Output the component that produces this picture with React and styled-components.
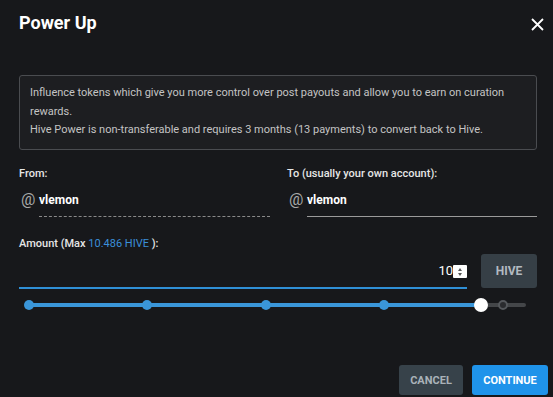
import React from 'react';
import styled, { createGlobalStyle } from 'styled-components';

const GlobalStyle = createGlobalStyle`
	body {
		margin: 0;
		background: #17181b;
		font-family: Roboto, "Liberation Sans", sans-serif;
	}
`;

const Modal = styled.div`
	width: 553px;
	height: 397px;
	box-sizing: border-box;
	display: flex;
	flex-direction: column;
	background: #17181b;
	color: #e4e4e4;
`;

const Header = styled.div`
	display: flex;
	justify-content: space-between;
	align-items: flex-start;
	padding: 12px 9px 0 19px;
`;

const Title = styled.h2`
	margin: 0;
	font-size: 18px;
	line-height: 22px;
	font-weight: 700;
	color: #fff;
`;

const CloseButton = styled.button`
	display: flex;
	margin-top: 6px;
	padding: 0;
	border: 0;
	background: none;
	color: #fff;
	cursor: pointer;
`;

const Body = styled.div`
	padding: 0 16px 0 19px;
`;

const InfoBox = styled.div`
	margin-top: 41px;
	padding: 8px 10px 9px;
	border: 1px solid #4a4c50;
	border-radius: 3px;
	background: #1d1e21;
	font-size: 11px;
	line-height: 18.5px;
	color: #c4c4c4;
`;

const Fields = styled.div`
	display: grid;
	grid-template-columns: 251px 1fr;
	column-gap: 17px;
	margin-top: 17px;
`;

const Label = styled.div`
	font-size: 11px;
	line-height: 14px;
	font-weight: 500;
	color: #e6e6e6;
	margin-bottom: ${(p) => p.$gap || 0}px;
`;

const AccountRow = styled.div`
	display: flex;
	align-items: flex-end;
`;

const At = styled.span`
	width: 18px;
	padding: 0 0 8px 2px;
	font-size: 16px;
	line-height: 18px;
	color: #a8a8a8;
`;

const AccountInput = styled.div`
	flex: 1;
	padding: 6px 0 8px;
	font-size: 12px;
	line-height: 16px;
	font-weight: 700;
	color: #fff;
	border-bottom: 1px ${(p) => (p.$dashed ? 'dashed #8a8a8a' : 'solid #9a9a9a')};
`;

const AmountLabel = styled(Label)`
	margin-top: 20px;
`;

const MaxLink = styled.span`
	color: #3b8fd9;
	font-weight: 400;
`;

const AmountRow = styled.div`
	display: flex;
	align-items: flex-start;
	gap: 14px;
	margin-top: 3px;
`;

const AmountInput = styled.div`
	flex: 1;
	height: 33px;
	display: flex;
	justify-content: flex-end;
	align-items: center;
	border-bottom: 2px solid #2f8fd6;
	font-size: 13px;
	color: #fff;
`;

const Spinner = styled.span`
	display: flex;
	flex-direction: column;
	justify-content: center;
	align-items: center;
	gap: 2px;
	width: 14px;
	height: 13px;
	margin-top: 3px;
	background: #fff;
	border-radius: 1px;

	&::before,
	&::after {
		content: '';
		border-left: 2.5px solid transparent;
		border-right: 2.5px solid transparent;
	}
	&::before {
		border-bottom: 3px solid #555;
	}
	&::after {
		border-top: 3px solid #555;
	}
`;

const UnitButton = styled.button`
	width: 56px;
	height: 34px;
	border: 0;
	border-radius: 3px;
	background: #363f46;
	color: #b3bac1;
	font-family: inherit;
	font-size: 12px;
	font-weight: 700;
`;

const Slider = styled.div`
	position: relative;
	height: 16px;
	margin: 8px 11px 0 10px;
`;

const Rail = styled.div`
	position: absolute;
	left: 0;
	right: 0;
	top: 6px;
	height: 4px;
	border-radius: 2px;
	background: #444649;
`;

const Track = styled(Rail)`
	right: auto;
	background: #3a96d9;
`;

const Dot = styled.span`
	position: absolute;
	top: 3px;
	width: 10px;
	height: 10px;
	box-sizing: border-box;
	margin-left: -5px;
	border-radius: 50%;
	background: ${(p) => (p.$active ? '#3a96d9' : '#2a2b2e')};
	border: ${(p) => (p.$active ? '0' : '2px solid #55585c')};
`;

const Thumb = styled.span`
	position: absolute;
	top: 1px;
	width: 14px;
	height: 14px;
	margin-left: -7px;
	border-radius: 50%;
	background: #fff;
`;

const Footer = styled.div`
	display: flex;
	justify-content: flex-end;
	gap: 9px;
	margin-top: auto;
	padding: 0 5px 2px 0;
`;

const Button = styled.button`
	width: ${(p) => p.$width}px;
	height: 30px;
	padding: 0;
	border: 0;
	border-radius: 3px;
	font-family: inherit;
	font-size: 11px;
	font-weight: 700;
	background: ${(p) => (p.$primary ? '#1f93ea' : '#37424a')};
	color: ${(p) => (p.$primary ? '#fff' : '#aab2b9')};
`;

const max = 10.486;
const marks = [0, 2.5, 5, 7.5, 10];
const thumbPct = 91;

export default function App() {
	return (
		<>
			<GlobalStyle />
			<Modal>
				<Header>
					<Title>Power Up</Title>
					<CloseButton>
						<svg width="13" height="13" viewBox="0 0 13 13" fill="none" stroke="currentColor" strokeWidth="1.8">
							<path d="M1 1L12 12M12 1L1 12" />
						</svg>
					</CloseButton>
				</Header>
				<Body>
					<InfoBox>
						Influence tokens which give you more control over post payouts and allow you to earn on curation rewards.
						<br />
						Hive Power is non-transferable and requires 3 months (13 payments) to convert back to Hive.
					</InfoBox>
					<Fields>
						<div>
							<Label $gap={5}>From:</Label>
							<AccountRow>
								<At>@</At>
								<AccountInput $dashed>vlemon</AccountInput>
							</AccountRow>
						</div>
						<div>
							<Label $gap={5}>To (usually your own account):</Label>
							<AccountRow>
								<At>@</At>
								<AccountInput>vlemon</AccountInput>
							</AccountRow>
						</div>
					</Fields>
					<AmountLabel>
						Amount (Max <MaxLink>10.486 HIVE</MaxLink> ):
					</AmountLabel>
					<AmountRow>
						<AmountInput>
							10
							<Spinner />
						</AmountInput>
						<UnitButton>HIVE</UnitButton>
					</AmountRow>
					<Slider>
						<Rail />
						<Track style={{ width: `${thumbPct}%` }} />
						{marks.map((m) => {
							const pct = (m / max) * 100;
							return <Dot key={m} $active={pct <= thumbPct} style={{ left: `${pct}%` }} />;
						})}
						<Thumb style={{ left: `${thumbPct}%` }} />
					</Slider>
				</Body>
				<Footer>
					<Button $width={64}>CANCEL</Button>
					<Button $primary $width={76}>CONTINUE</Button>
				</Footer>
			</Modal>
		</>
	);
}
